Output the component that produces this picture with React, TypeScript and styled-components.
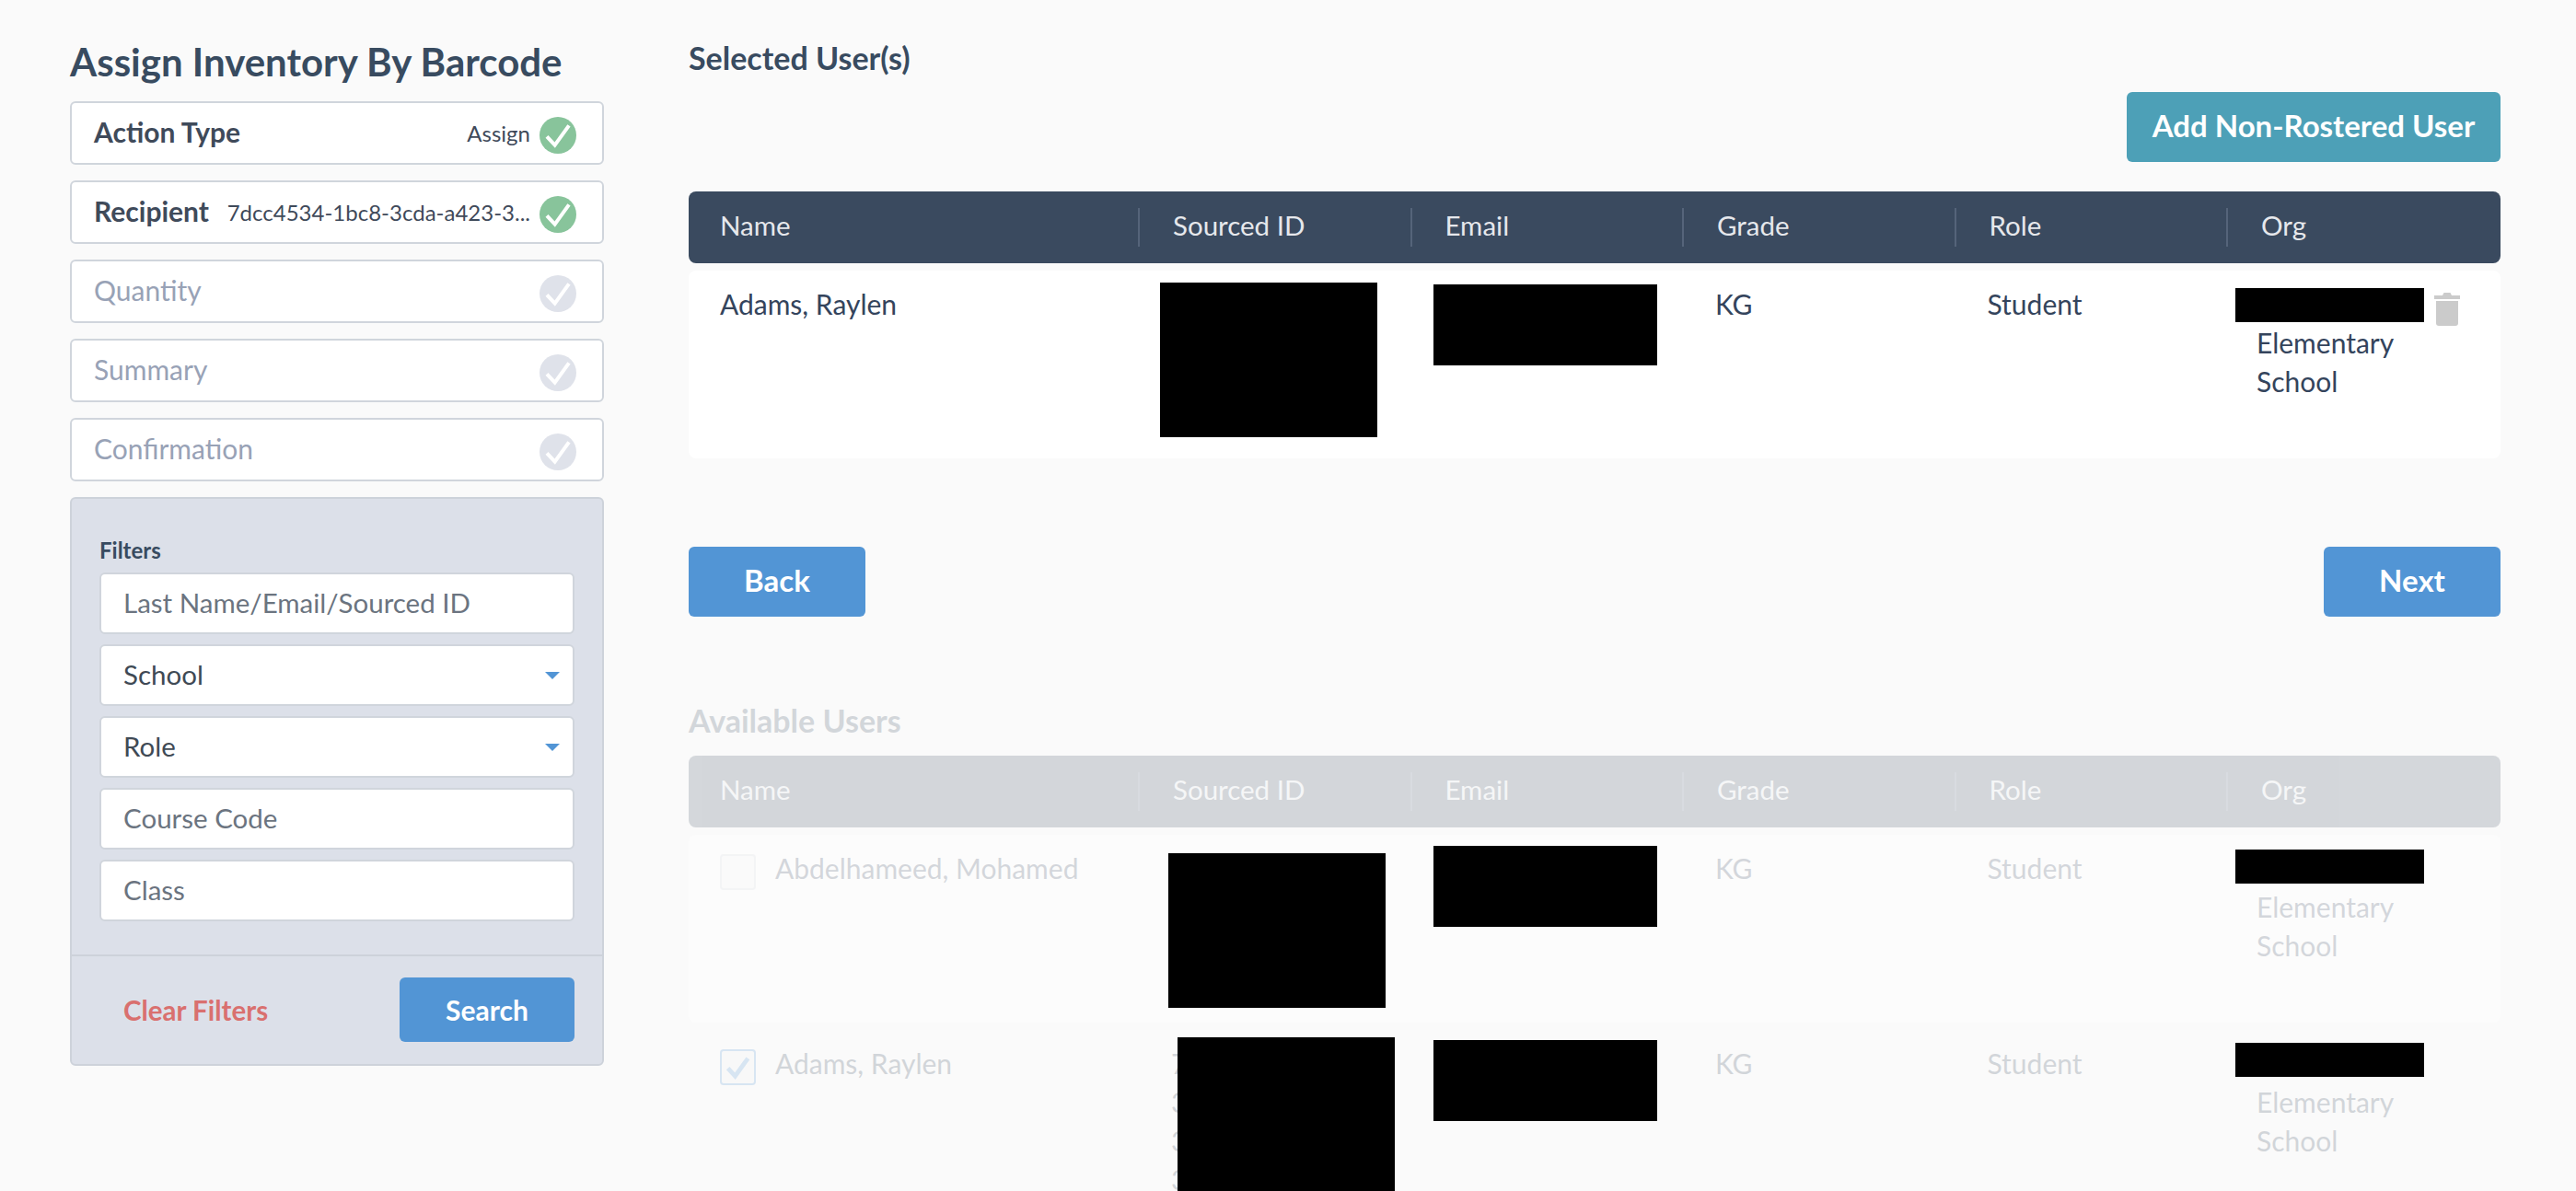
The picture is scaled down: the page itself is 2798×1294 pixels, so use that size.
import React from "react";
import styled, { createGlobalStyle } from "styled-components";

const GlobalStyle = createGlobalStyle`
  html, body {
    margin: 0;
    height: 100%;
    overflow: hidden;
    background: #fafafa;
  }
  * {
    box-sizing: border-box;
  }
`;

const Page = styled.div`
  display: flex;
  align-items: flex-start;
  gap: 92px;
  height: 1294px;
  padding-left: 76px;
  overflow: hidden;
  font-family: "Lato", "Liberation Sans", sans-serif;
  color: #34445c;
`;

const Sidebar = styled.aside`
  width: 580px;
  flex: none;
  padding-top: 43px;
`;

const Title = styled.h1`
  margin: 0 0 19px;
  font-size: 42px;
  line-height: 48px;
  font-weight: 700;
  color: #384b60;
`;

const Step = styled.div<{ $active?: boolean }>`
  display: flex;
  align-items: center;
  height: 69px;
  margin-bottom: 17px;
  padding: 0 28px 0 24px;
  background: #fff;
  border: 2px solid #d0d5dc;
  border-radius: 6px;
  color: ${(p) => (p.$active ? "#3f4a5a" : "#98a2b6")};
`;

const StepName = styled.span<{ $active?: boolean }>`
  margin-bottom: 4px;
  font-size: 30px;
  font-weight: ${(p) => (p.$active ? 700 : 400)};
  white-space: nowrap;
`;

const StepValue = styled.span`
  flex: 1;
  padding-right: 10px;
  text-align: right;
  font-size: 24px;
  color: #3f4a5a;
  white-space: nowrap;
`;

const StepBadge = styled.span<{ $done?: boolean }>`
  display: flex;
  align-items: center;
  justify-content: center;
  width: 40px;
  height: 40px;
  flex: none;
  margin-left: auto;
  margin-top: 4px;
  border-radius: 50%;
  background: ${(p) => (p.$done ? "#88c49b" : "#dfe2ea")};
`;

const FilterPanel = styled.section`
  height: 618px;
  background: #dce0e9;
  border: 2px solid #cdd2da;
  border-radius: 6px;
`;

const FilterBody = styled.div`
  display: flex;
  flex-direction: column;
  gap: 11px;
  height: 497px;
  padding: 40px 30px 0;
  border-bottom: 2px solid #cdd2da;
`;

const FilterLabel = styled.div`
  margin-bottom: -3px;
  font-size: 24px;
  line-height: 32px;
  font-weight: 700;
  color: #384b60;
`;

const TextInput = styled.input`
  width: 100%;
  height: 67px;
  flex: none;
  padding: 0 24px 3px;
  background: #fff;
  border: 2px solid #d0d5dc;
  border-radius: 6px;
  font-family: inherit;
  font-size: 29.5px;
  &::placeholder {
    color: #6b7480;
    opacity: 1;
  }
`;

const SelectBox = styled.div`
  display: flex;
  align-items: center;
  justify-content: space-between;
  height: 67px;
  flex: none;
  padding: 0 14px 3px 24px;
  background: #fff;
  border: 2px solid #d0d5dc;
  border-radius: 6px;
  font-size: 29.5px;
  color: #3f4a55;
`;

const Caret = styled.span`
  width: 0;
  height: 0;
  margin-top: 3px;
  border-left: 8px solid transparent;
  border-right: 8px solid transparent;
  border-top: 8px solid #5295d5;
`;

const FilterActions = styled.div`
  display: flex;
  align-items: center;
  justify-content: space-between;
  padding: 23px 30px 0 56px;
`;

const ClearLink = styled.span`
  font-size: 29.5px;
  font-weight: 700;
  color: #d9706f;
`;

const Button = styled.button<{ $teal?: boolean; $w: number; $h: number; $size?: number }>`
  width: ${(p) => p.$w}px;
  height: ${(p) => p.$h}px;
  padding: 0 0 4px;
  border: none;
  border-radius: 6px;
  background: ${(p) => (p.$teal ? "#4da0b7" : "#5295d5")};
  color: #fff;
  font-family: inherit;
  font-size: ${(p) => p.$size ?? 33}px;
  font-weight: 700;
`;

const SearchButton = styled(Button)`
  padding: 0;
`;

const Main = styled.main`
  width: 1968px;
  flex: none;
  padding-top: 45px;
`;

const SectionTitle = styled.h2`
  margin: 0;
  font-size: 34px;
  line-height: 36px;
  font-weight: 700;
  color: #384b60;
`;

const TopActions = styled.div`
  display: flex;
  justify-content: flex-end;
  margin: 19px 0 32px;
`;

const Faded = styled.div`
  opacity: 0.2;
`;

const HeaderRow = styled.div`
  display: grid;
  grid-template-columns: 488px repeat(4, 295.5px) 298px;
  align-items: center;
  height: 78px;
  background: #3a4a5f;
  border-radius: 8px;
  color: #e6e8ec;
  font-size: 29.5px;
`;

const HeaderCell = styled.div<{ $first?: boolean }>`
  height: 42px;
  line-height: 38px;
  padding-left: ${(p) => (p.$first ? 34 : 36)}px;
  border-left: ${(p) => (p.$first ? "none" : "2px solid #55647a")};
`;

const Row = styled.div<{ $bg?: string }>`
  display: grid;
  grid-template-columns: 488px repeat(4, 295.5px) 298px;
  height: 204px;
  margin-top: 8px;
  padding-top: 15px;
  background: ${(p) => p.$bg ?? "transparent"};
  border-radius: 8px;
`;

const Cell = styled.div<{ $first?: boolean }>`
  position: relative;
  padding-left: ${(p) => (p.$first ? 34 : 36)}px;
  font-size: 30px;
  line-height: 42px;
`;

const CellText = styled.div<{ $faded?: boolean }>`
  opacity: ${(p) => (p.$faded ? 0.2 : 1)};
`;

const NameWrap = styled(CellText)`
  display: flex;
  gap: 21px;
`;

const CheckBox = styled.span<{ $checked?: boolean }>`
  display: flex;
  align-items: center;
  justify-content: center;
  width: 39px;
  height: 39px;
  margin-top: 6px;
  flex: none;
  background: #f5f5f5;
  border: 2px solid ${(p) => (p.$checked ? "#5295d5" : "#d0d5dc")};
  border-radius: 4px;
`;

const OrgLine = styled.span`
  display: block;
  margin-left: -3px;
`;

// black boxes that lie over the cell text in the reference
const Redaction = styled.div<{ $l: number; $t: number; $w: number; $h: number }>`
  position: absolute;
  left: ${(p) => p.$l}px;
  top: ${(p) => p.$t}px;
  width: ${(p) => p.$w}px;
  height: ${(p) => p.$h}px;
  background: #000;
`;

const Trash = styled.svg`
  position: absolute;
  left: 226px;
  top: 9px;
`;

const NavRow = styled.div`
  display: flex;
  justify-content: space-between;
  margin: 96px 0 95px;
`;

const AvailableTitle = styled(SectionTitle)`
  margin-bottom: 20px;
`;

const Check = ({ color, size, weight = 3 }: { color: string; size: number; weight?: number }) => (
  <svg width={size} height={size} viewBox="0 0 24 24" fill="none">
    <path d="M3 13l6.5 7L21 4" stroke={color} strokeWidth={weight} />
  </svg>
);

const columns = ["Name", "Sourced ID", "Email", "Grade", "Role", "Org"];

const TableHeader = () => (
  <HeaderRow>
    {columns.map((c, i) => (
      <HeaderCell key={c} $first={i === 0}>
        {c}
      </HeaderCell>
    ))}
  </HeaderRow>
);

type UserRowProps = {
  name: string;
  bg?: string;
  faded?: boolean;
  checked?: boolean;
  trash?: boolean;
  idLines?: string[];
  idBox: { l: number; t: number };
  emailTop: number;
  orgTop: number;
};

const UserRow = (props: UserRowProps) => {
  const { faded } = props;
  return (
    <Row $bg={props.bg}>
      <Cell $first>
        <NameWrap $faded={faded}>
          {faded && (
            <CheckBox $checked={props.checked}>
              {props.checked && <Check color="#5295d5" size={29} weight={4} />}
            </CheckBox>
          )}
          {props.name}
        </NameWrap>
      </Cell>
      <Cell>
        <CellText $faded={faded}>
          {props.idLines?.map((line, i) => (
            <div key={i}>{line}</div>
          ))}
        </CellText>
        <Redaction $l={props.idBox.l} $t={props.idBox.t} $w={236} $h={168} />
      </Cell>
      <Cell>
        <Redaction $l={25} $t={props.emailTop} $w={243} $h={88} />
      </Cell>
      <Cell>
        <CellText $faded={faded}>KG</CellText>
      </Cell>
      <Cell>
        <CellText $faded={faded}>Student</CellText>
      </Cell>
      <Cell>
        <Redaction $l={10} $t={props.orgTop} $w={205} $h={37} />
        <CellText $faded={faded}>
          <OrgLine>&nbsp;</OrgLine>
          <OrgLine>Elementary</OrgLine>
          <OrgLine>School</OrgLine>
        </CellText>
        {props.trash && (
          <Trash width="28" height="36" viewBox="0 0 28 36" fill="#cbcbcb">
            <path d="M0 3h9l1.5-3h7L19 3h9v4H0z" />
            <path d="M2 9h24v24a3 3 0 0 1-3 3H5a3 3 0 0 1-3-3z" />
          </Trash>
        )}
      </Cell>
    </Row>
  );
};

const steps = [
  { name: "Action Type", value: "Assign", done: true },
  { name: "Recipient", value: "7dcc4534-1bc8-3cda-a423-3...", done: true },
  { name: "Quantity" },
  { name: "Summary" },
  { name: "Confirmation" },
];

export default function App() {
  return (
    <Page>
      <GlobalStyle />
      <Sidebar>
        <Title>Assign Inventory By Barcode</Title>
        {steps.map((s) => (
          <Step key={s.name} $active={s.done}>
            <StepName $active={s.done}>{s.name}</StepName>
            {s.value && <StepValue>{s.value}</StepValue>}
            <StepBadge $done={s.done}>
              <Check color="#fff" size={32} />
            </StepBadge>
          </Step>
        ))}
        <FilterPanel>
          <FilterBody>
            <FilterLabel>Filters</FilterLabel>
            <TextInput placeholder="Last Name/Email/Sourced ID" />
            <SelectBox>
              School
              <Caret />
            </SelectBox>
            <SelectBox>
              Role
              <Caret />
            </SelectBox>
            <TextInput placeholder="Course Code" />
            <TextInput placeholder="Class" />
          </FilterBody>
          <FilterActions>
            <ClearLink>Clear Filters</ClearLink>
            <SearchButton $w={190} $h={70} $size={30}>
              Search
            </SearchButton>
          </FilterActions>
        </FilterPanel>
      </Sidebar>
      <Main>
        <SectionTitle>Selected User(s)</SectionTitle>
        <TopActions>
          <Button $teal $w={406} $h={76}>
            Add Non-Rostered User
          </Button>
        </TopActions>
        <TableHeader />
        <UserRow name="Adams, Raylen" bg="#fff" trash idBox={{ l: 24, t: -2 }} emailTop={0} orgTop={4} />
        <NavRow>
          <Button $w={192} $h={76}>
            Back
          </Button>
          <Button $w={192} $h={76}>
            Next
          </Button>
        </NavRow>
        <Faded>
          <AvailableTitle>Available Users</AvailableTitle>
        </Faded>
        <Faded>
          <TableHeader />
        </Faded>
        <UserRow name="Abdelhameed, Mohamed" faded bg="#fcfcfc" idBox={{ l: 33, t: 5 }} emailTop={-3} orgTop={1} />
        <UserRow
          name="Adams, Raylen"
          faded
          checked
          idLines={["7dcc4534-", "3cda-a423-", "3", "3"]}
          idBox={{ l: 43, t: -7 }}
          emailTop={-4}
          orgTop={-1}
        />
      </Main>
    </Page>
  );
}
